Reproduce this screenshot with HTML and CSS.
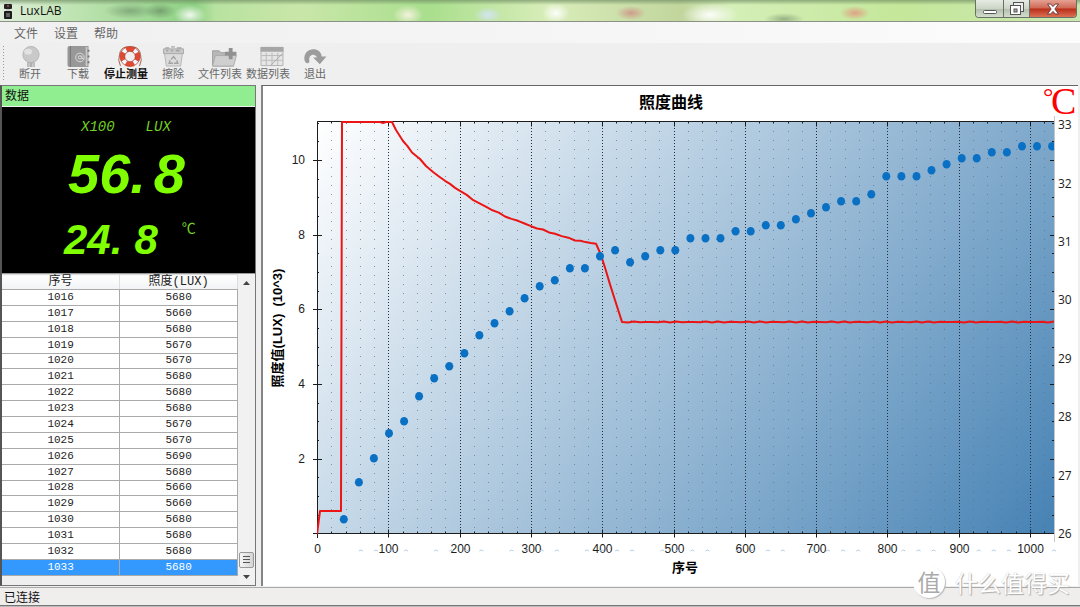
FILE: index.html
```html
<!DOCTYPE html>
<html lang="zh-CN">
<head>
<meta charset="utf-8">
<title>LuxLAB</title>
<link rel="stylesheet" href="styles.css">
</head>
<body>
<div class="window">
  <header class="titlebar">
    <svg class="app-icon" width="8" height="16" viewBox="0 0 8 16"><rect width="8" height="5" y="1" rx="1" fill="#222"/><rect x="2" y="6" width="4" height="3" fill="#c9c9c9"/><rect y="8" width="8" height="8" rx="1" fill="#1b1b1b"/><circle cx="4" cy="3" r="1" fill="#b55"/><path d="M2 11h4M2 13h4" stroke="#aaa"/></svg>
    <h1 class="app-name">LuxLAB</h1>
    <div class="window-buttons">
      <button class="wb wb-min" aria-label="最小化"><svg width="16" height="8" viewBox="0 0 16 8"><rect x="1.500" y="2.500" width="13" height="3" rx="1" fill="#fff" stroke="#555"/></svg></button>
      <button class="wb wb-max" aria-label="还原"><svg width="16" height="14" viewBox="0 0 16 14"><rect x="4.500" y=".5" width="10" height="9" fill="#eee" stroke="#555"/><rect x="1.500" y="3.500" width="10" height="9" fill="#fff" stroke="#555"/><rect x="5" y="7" width="3" height="3" fill="#aaa" stroke="#555"/></svg></button>
      <button class="wb wb-close" aria-label="关闭"><svg width="14" height="12" viewBox="0 0 14 12"><path d="M1.500 1h3.200L7 3.600 9.300 1h3.200L8.900 6l3.600 5H9.300L7 8.400 4.700 11H1.500L5.100 6z" fill="#fff" stroke="#6d3b3b"/></svg></button>
    </div>
  </header>

  <nav class="menubar">
    <button>文件</button><button>设置</button><button>帮助</button>
  </nav>

  <div class="toolbar">
    <button class="tool" disabled>
      <svg viewBox="0 0 24 22"><circle cx="13" cy="9" r="8.500" fill="#c9c9c9" stroke="#b5b5b5"/><ellipse cx="10" cy="6" rx="4" ry="3" fill="#e2e2e2"/><path d="M9 17h8v5H9z" fill="#b0b0b0"/><path d="M11 18v4M15 18v4" stroke="#ddd"/></svg>
      <span>断开</span></button>
    <button class="tool" disabled>
      <svg viewBox="0 0 24 22"><path d="M3 0h20v22H3a2 2 0 0 1-2-2V2a2 2 0 0 1 2-2z" fill="#989898"/><path d="M4 0v22" stroke="#777"/><path d="M21 1v20" stroke="#c9c9c9" stroke-width="2"/><circle cx="14" cy="12" r="4.500" fill="none" stroke="#ddd"/><circle cx="14" cy="12" r="1.700" fill="none" stroke="#ddd"/><path d="M16 10v3h2" fill="none" stroke="#ddd"/><path d="M22 5h2M22 11h2M22 17h2" stroke="#777" stroke-width="2"/></svg>
      <span>下载</span></button>
    <button class="tool tool-active">
      <svg class="buoy" viewBox="0 0 26 22"><path d="M3 21Q0 15 2 9Q3 2 9 1H17Q23 2 24 9Q26 15 23 21" fill="none" stroke="#9c5d4c"/><circle cx="13" cy="11" r="8" fill="none" stroke="#e04a32" stroke-width="5"/><circle cx="13" cy="11" r="8" fill="none" stroke="#eef6ff" stroke-width="5" stroke-dasharray="4 8.570" stroke-dashoffset="-4.300"/><circle cx="13" cy="11" r="5.500" fill="none" stroke="#a23a29" stroke-width=".7"/><circle cx="13" cy="11" r="10.500" fill="none" stroke="#b23c2a" stroke-width=".7"/></svg>
      <span>停止测量</span></button>
    <button class="tool tool-narrow" disabled>
      <svg viewBox="0 0 24 22"><path d="M3 7h19l-2 14H5z" fill="#dcdcdc" stroke="#b5b5b5"/><path d="M2 3h21v5H2z" fill="#c9c9c9" stroke="#aaa"/><path d="M4 2h4M10 1h4M16 2h5M5 5h2M10 5h2M15 5h4" stroke="#8f8f8f"/><path d="m10 14 2.500-3 2.500 3M16 15l1 3h-4M12 18H8l1-3" fill="none" stroke="#a2a2a2" stroke-width="1.500"/></svg>
      <span>擦除</span></button>
    <button class="tool" disabled>
      <svg class="folder" viewBox="0 0 26 22"><path d="M1 5h7l2 2h13v14H1z" fill="#b7b7b7" stroke="#a0a0a0"/><path d="m1 21 3-11h22l-3 11z" fill="#cfcfcf" stroke="#acacac"/><path d="M18 2h4v4h4v4h-4v4h-4v-4h-4V6h4z" fill="#919191"/></svg>
      <span>文件列表</span></button>
    <button class="tool" disabled>
      <svg class="sheet" viewBox="0 0 26 22"><path d="M1.500 1.500h23v19h-23z" fill="#e6e6e6" stroke="#b0b0b0"/><path d="M1 1h24v5H1z" fill="#a6a6a6"/><path d="M2 10h22M2 15h22M7 7v13M13 7v13M19 7v13" stroke="#bababa"/><path d="m12 20 12-12" stroke="#a8a8a8"/></svg>
      <span>数据列表</span></button>
    <button class="tool tool-narrow" disabled>
      <svg viewBox="0 0 24 22"><path d="M1 15C-1 1 18 0 19 11h5l-7 8-7-7h4C12 7 5 9 6 15c1 4-4 4-5 0z" fill="#9c9c9c"/></svg>
      <span>退出</span></button>
  </div>

  <main class="workspace">
    <aside class="data-panel">
      <h2 class="panel-title">数据</h2>
      <section class="lcd">
        <div class="lcd-units"><span>X100</span><span>LUX</span></div>
        <div class="readout readout-lux"><span>56.</span><span>8</span></div>
        <div class="lcd-temp">
          <div class="readout readout-temp"><span>24.</span><span>8</span></div>
          <span class="degree">℃</span>
        </div>
      </section>
      <section class="log">
        <div class="log-body">
          <table>
            <thead><tr><th>序号</th><th>照度(LUX)</th></tr></thead>
            <tbody>
              <tr><td>1016</td><td>5680</td></tr>
              <tr><td>1017</td><td>5660</td></tr>
              <tr><td>1018</td><td>5680</td></tr>
              <tr><td>1019</td><td>5670</td></tr>
              <tr><td>1020</td><td>5670</td></tr>
              <tr><td>1021</td><td>5680</td></tr>
              <tr><td>1022</td><td>5680</td></tr>
              <tr><td>1023</td><td>5680</td></tr>
              <tr><td>1024</td><td>5670</td></tr>
              <tr><td>1025</td><td>5670</td></tr>
              <tr><td>1026</td><td>5690</td></tr>
              <tr><td>1027</td><td>5680</td></tr>
              <tr><td>1028</td><td>5660</td></tr>
              <tr><td>1029</td><td>5660</td></tr>
              <tr><td>1030</td><td>5680</td></tr>
              <tr><td>1031</td><td>5680</td></tr>
              <tr><td>1032</td><td>5680</td></tr>
              <tr class="selected"><td>1033</td><td>5680</td></tr>
            </tbody>
          </table>
        </div>
        <div class="scrollbar">
          <button aria-label="向上"><svg width="7" height="4" viewBox="0 0 7 4"><path d="M0 4 3.500 0 7 4z" fill="#444"/></svg></button>
          <div class="thumb"></div>
          <button aria-label="向下"><svg width="7" height="4" viewBox="0 0 7 4"><path d="M0 0h7L3.500 4z" fill="#444"/></svg></button>
        </div>
      </section>
    </aside>
    <section class="chart-panel">
      <svg class="chart" id="chart" viewBox="263 86 815 500" role="img" aria-label="照度曲线">
        <defs>
          <linearGradient id="plot-bg" gradientUnits="userSpaceOnUse" x1="317" y1="121" x2="981" y2="631">
            <stop offset="0" stop-color="#ffffff"/><stop offset="1" stop-color="#4682b4"/>
          </linearGradient>
          <clipPath id="plot-clip"><rect x="317" y="120" width="737" height="415"/></clipPath>
        </defs>
        <rect x="317" y="121" width="737" height="413" fill="url(#plot-bg)"/>
        <g id="grid"></g>
        <path class="frame" d="M317.500 538V121.500H1054M313 533.500h741"/>
        <path class="frame-right" d="M1054.500 116v426"/>
        <g id="ticks"></g>
        <g clip-path="url(#plot-clip)" id="series"></g>
        <g id="labels"></g>
        <text class="chart-title" x="671" y="108">照度曲线</text>
        <text class="axis-title" x="685" y="572">序号</text>
        <text class="axis-title" transform="translate(282 328) rotate(-90)">照度值(LUX)&#160; (10^3)</text>
        <text class="celsius"><tspan class="celsius-ring" x="1043" y="105">°</tspan><tspan x="1051" y="114">C</tspan></text>
      </svg>
    </section>
  </main>

  <footer class="statusbar">已连接</footer>
  <div class="edge"></div>
  <div class="watermark"><span class="seal">值</span><span>什么值得买</span></div>
</div>
<script src="chart.js"></script>
</body>
</html>
```
FILE: styles.css
```css
* { box-sizing: border-box; }
body {
  margin: 0;
  font-family: "Liberation Sans", "Noto Sans CJK SC", sans-serif;
  font-size: 12px;
  background: #efefef;
}
button { font: inherit; color: inherit; border: 0; padding: 0; background: none; }
h1, h2 { margin: 0; font-weight: normal; font-size: 12px; }

.window { position: relative; display: flex; flex-direction: column; min-height: 100vh; }

.titlebar {
  display: flex;
  align-items: center;
  height: 22px;
  padding-left: 4px;
  border-bottom: 1px solid #8b9187;
  background:
    linear-gradient(#6c8a60aa, #ffffff00 5px),
    radial-gradient(ellipse 26px 8px at 130px 11px, #6a8c6799, #0000),
    radial-gradient(ellipse 16px 8px at 160px 11px, #5d7d5999, #0000),
    radial-gradient(ellipse 16px 10px at 190px 15px, #ffffffdd, #0000),
    radial-gradient(ellipse 15px 10px at 408px 15px, #fff5e8dd, #0000),
    radial-gradient(ellipse 14px 8px at 488px 15px, #d3e4f3, #0000),
    radial-gradient(ellipse 14px 10px at 556px 13px, #fffffff0, #0000),
    radial-gradient(ellipse 15px 7px at 631px 13px, #d08b83cc, #0000),
    radial-gradient(ellipse 28px 12px at 710px 15px, #fffffff0, #0000),
    radial-gradient(ellipse 20px 6px at 784px 19px, #718b6899, #0000),
    radial-gradient(ellipse 15px 7px at 855px 13px, #e4907ccc, #0000),
    linear-gradient(90deg, #e0eedb, #c4e6b8 60px, #8ed183 195px, #b8e2a0 215px, #c9e6a9 300px, #a9df8d 430px, #d9edba 550px, #c1d59d 680px, #d5efb8 730px, #c4e79a 900px, #cbe7b0);
}
.app-name { margin-left: 8px; font-family: "Open Sans", sans-serif; color: #111; }
.window-buttons {
  display: flex;
  align-self: flex-start;
  margin-left: auto;
  margin-right: 3px;
  height: 18px;
  border: 1px solid #687264;
  border-top: 0;
  border-radius: 0 0 4px 4px;
  overflow: hidden;
}
.wb { display: flex; align-items: center; justify-content: center; width: 26px; background: linear-gradient(#e6ebe3, #ccd4c7 50%, #b3bdad 51%, #d3ddcd); border-right: 1px solid #687264; }
.wb-min { width: 28px; padding-top: 6px; }
.wb-close { width: 46px; border: 0; background: linear-gradient(#e5a193, #cf6754 48%, #b92d18 52%, #dc7255); }

.menubar { display: flex; gap: 16px; height: 21px; padding-left: 14px; color: #666; background: linear-gradient(90deg, #f0f0f0, #f5f5f5 50%, #fcfcfc); }

.toolbar {
  display: flex;
  height: 42px;
  padding-left: 6px;
  background: repeating-linear-gradient(#999 0 1px, #0000 1px 3px) 3px 3px / 1px 36px no-repeat, #efefef;
}
.tool { display: flex; flex-direction: column; align-items: center; width: 48px; padding-top: 3px; font-size: 11px; line-height: 14px; color: #686868; white-space: nowrap; }
.tool svg { width: 26px; height: 21px; flex: none; }
.tool .folder, .tool .buoy, .tool .sheet { margin-left: 8px; }
.tool-narrow { width: 46px; }
.tool-active { color: #111; font-weight: bold; }

.workspace { display: flex; flex: 1; gap: 5px; padding-right: 2px; }
.data-panel { display: flex; flex-direction: column; flex: 0 0 256px; border: 1px solid #777; border-left: 2px solid #555; }
.panel-title { height: 20px; padding-left: 3px; line-height: 20px; color: #111; background: #90ee90; }
.lcd { margin-top: 1px; padding-top: 12px; height: 166px; background: #000; color: #7fff00; }
.lcd-units { display: flex; gap: 31px; padding-left: 79px; font: italic 14px/16px "Liberation Mono", monospace; color: #74d321; }
.readout { display: flex; font-family: "Liberation Sans Narrow", "Liberation Sans", sans-serif; font-style: italic; font-weight: bold; }
.readout-lux { gap: 8px; padding: 6px 0 0 66px; font-size: 56px; line-height: 66px; }
.lcd-temp { display: flex; gap: 24px; padding-left: 62px; }
.readout-temp { gap: 12px; font-size: 42px; line-height: 66px; }
.degree { font: 14px/40px "Noto Sans CJK SC", sans-serif; color: #74d321; }

.log { display: flex; flex: 1; border-top: 1px solid #999; background: #efefef; }
.log-body { flex: 1; }
.log table { width: 100%; height: 302px; border-collapse: collapse; table-layout: fixed; background: #fff; font: 11px/13px "Liberation Mono", "Noto Sans CJK SC", monospace; color: #222; }
.log th, .log td { padding: 0; text-align: center; border: 1px solid #aaa; border-left: 0; }
.log th { font-weight: normal; font-size: 12px; background: linear-gradient(#fff, #f1f2f4); border-color: #ddd; border-bottom-color: #aaa; line-height: 14px; }
.log .selected { background: #3399ff; color: #fff; }
.scrollbar { display: flex; flex-direction: column; width: 17px; background: #f1f1f1; }
.scrollbar button { display: flex; align-items: center; justify-content: center; height: 17px; }
.thumb { height: 16px; margin: auto 1px 0; border: 1px solid #999; border-radius: 2px; background: repeating-linear-gradient(#555 0 1px, #0000 1px 3px) 3px 3px / 7px 7px no-repeat, linear-gradient(90deg, #f5f5f5, #d5d5d5); }

.chart-panel { flex: 1; min-width: 0; border-top: 1px solid #666; border-left: 2px solid #858585; background: #fff; }
.chart { display: block; width: 100%; height: 100%; overflow: visible; font-family: "Liberation Sans", "Noto Sans CJK SC", sans-serif; }
.frame, .tick { fill: none; stroke: #1c1c1c; }
.frame-right { stroke: #c3c6ca; }
.grid-major { stroke: #1f2f40; stroke-dasharray: 1 2; }
.grid-minor { stroke: #55708a; stroke-opacity: .7; stroke-dasharray: 1 8; }
.lux { fill: none; stroke: #ec1515; stroke-width: 2; stroke-linejoin: round; }
.temp { fill: #0a70c4; }
.residue { fill: none; stroke: #b4cde2; }
.num { font-size: 12px; fill: #1c1c1c; text-anchor: middle; }
.num-left { text-anchor: end; }
.num-right { font-family: "Open Sans", sans-serif; font-size: 12px; text-anchor: start; }
.chart-title { font-size: 16px; font-weight: bold; text-anchor: middle; }
.axis-title { font-size: 13px; font-weight: bold; text-anchor: middle; }
.celsius { fill: #f00; font-family: "Liberation Serif", serif; font-size: 38px; }
.celsius-ring { font-size: 26px; }

.statusbar { height: 18px; margin-top: 1px; padding-left: 4px; line-height: 20px; border-top: 1px solid #aaa; background: #f0eded; color: #111; }
.edge { height: 2px; border-top: 1px solid #777; background: #bbb; }

.watermark {
  position: absolute;
  right: 10px;
  bottom: 8px;
  display: flex;
  align-items: center;
  gap: 10px;
  font: 23px/34px "Noto Sans CJK SC", sans-serif;
  color: #fff;
  text-shadow: 1px 1px 1px #aaa, 0 0 1px #bbb;
}
.seal { width: 32px; height: 32px; line-height: 31px; text-align: center; border-radius: 50%; background: #fff; color: #aaa; text-shadow: none; box-shadow: 1px 1px 1px #bbb; }
```
FILE: chart.js
```js
const NS = 'http://www.w3.org/2000/svg';
const add = (parent, tag, attrs, text) => {
  const el = document.createElementNS(NS, tag);
  for (const k in attrs) el.setAttribute(k, attrs[k]);
  if (text !== undefined) el.textContent = text;
  document.getElementById(parent).appendChild(el);
};

const LEFT = 317.5, RIGHT = 1054, TOP = 121.5, BOTTOM = 533.5;
const x = n => Math.floor(LEFT + n * 0.713) + 0.5;
const y = lux => Math.round(BOTTOM - lux * 37.35) + 0.5;

for (let n = 0; n <= 1020; n += 20) {
  const major = n % 100 === 0, px = x(n);
  if (n) add('grid', 'path', { class: major ? 'grid-major' : 'grid-minor', d: `M${px} 122V533` });
  add('ticks', 'path', { class: 'tick', d: `M${px} ${TOP}v${major ? 5 : 2}M${px} ${BOTTOM - (major ? 4 : 2)}V${BOTTOM + (major ? 4 : 0)}` });
  if (major) add('labels', 'text', { class: 'num', x: px, y: 553 }, n);
}
for (let v = 1; v <= 22; v++) {
  const lux = v / 2, major = lux % 2 === 0;
  add('ticks', 'path', { class: 'tick', d: `M${major ? 313 : 317} ${y(lux)}H${major ? 322 : 319}M${RIGHT - (major ? 4 : 2)} ${y(lux)}H${RIGHT}` });
  if (major) add('labels', 'text', { class: 'num num-left', x: 305, y: y(lux) + 3 }, lux);
}
for (let t = 26; t <= 33; t++) {
  add('labels', 'text', { class: 'num num-right', x: 1058, y: Math.round(538 - (t - 26) * 58.4) }, t);
}

const temps = [519, 482, 458, 433, 421, 396, 378, 366, 353, 335, 323, 311, 298, 286, 280, 268,
  268, 256, 250, 262, 256, 250, 250, 238, 238, 238, 231, 231, 225, 225, 219, 213, 207, 201, 201,
  194, 176, 176, 176, 170, 164, 158, 158, 152, 152, 146, 146, 146];

const knots = [[317, 534], [320, 511], [341, 511], [342, 122], [380, 122], [383, 123], [386, 122], [392, 122],
  [396, 130], [403, 141], [412, 152], [420, 159], [426, 166], [433, 172], [445, 181], [460, 191],
  [480, 204], [505, 216], [531, 226], [555, 234], [575, 240], [596, 244], [601, 255], [610, 284],
  [622, 322], [1054, 322]];
let d = `M${knots[0]}`;
knots.slice(1).forEach(([kx, ky], i) => {
  const [px, py] = knots[i];
  const steps = px >= 396 ? Math.max(1, Math.round((kx - px) / 6)) : 1;
  for (let s = 1; s <= steps; s++) {
    const jitter = steps > 1 ? Math.sin(s * 2.7 + i) * 0.5 : 0;
    d += `L${(px + (kx - px) * s / steps).toFixed(1)} ${(py + (ky - py) * s / steps + jitter).toFixed(1)}`;
  }
});
add('series', 'path', { class: 'lux', d });
temps.forEach((t, i) => {
  const cx = (343.8 + i * 15.07).toFixed(1);
  add('series', 'ellipse', { class: 'temp', cx, cy: t + 0.3, rx: 4, ry: 4.3 });
  if (i % 5) add('labels', 'path', { class: 'residue', d: `M${cx} 551l2-1 2 1` });
});
```
